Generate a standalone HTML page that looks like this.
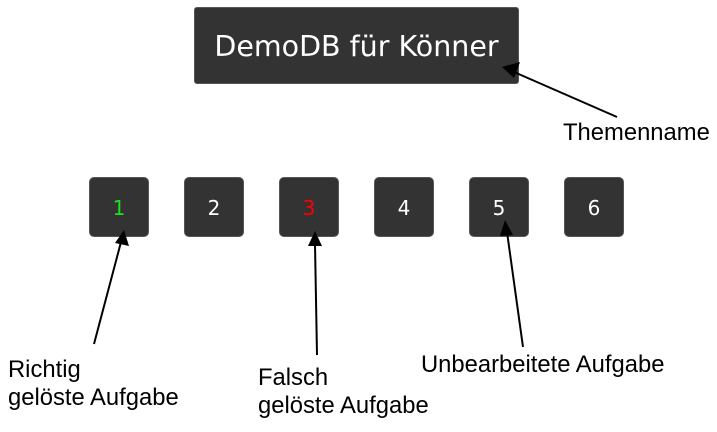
<!DOCTYPE html>
<html><head><style>
body{margin:0;width:717px;height:432px;background:#fff;position:relative;overflow:hidden;font-family:"Liberation Sans",Arial,sans-serif}
.t{position:absolute;left:194px;top:7px;width:325px;height:77px;background:#333;border:1px solid #555;border-radius:3px;box-sizing:border-box;color:#fff;font-family:"DejaVu Sans","Liberation Sans",sans-serif;font-size:28.5px;line-height:77px;text-align:center}
.b{position:absolute;top:177px;width:60px;height:60px;background:#333;border:1px solid #555;border-radius:5px;box-sizing:border-box;color:#fff;font-family:"DejaVu Sans",sans-serif;font-size:20px;line-height:60px;text-align:center}
.l{position:absolute;font-size:23.8px;line-height:28px;color:#000;white-space:nowrap}
svg{position:absolute;left:0;top:0}
</style></head><body>
<div class="t">DemoDB für Könner</div>
<div class="b" style="left:89px;color:#1ee01e">1</div>
<div class="b" style="left:184px">2</div>
<div class="b" style="left:279px;color:#f00">3</div>
<div class="b" style="left:374px">4</div>
<div class="b" style="left:469px">5</div>
<div class="b" style="left:564px">6</div>
<svg width="717" height="432">
<g stroke="#000" stroke-width="2" fill="#000">
<line x1="617" y1="117" x2="514" y2="72"/><polygon points="502,67 520,62 514,78" stroke="none"/>
<line x1="94" y1="344" x2="121" y2="242"/><polygon points="124,230 129,246 115,243" stroke="none"/>
<line x1="317" y1="355" x2="315" y2="244"/><polygon points="315,231 322,246 308,246" stroke="none"/>
<line x1="523" y1="347" x2="507" y2="232"/><polygon points="505,220 513,235 500,236" stroke="none"/>
</g></svg>
<div class="l" style="left:563px;top:119px">Themenname</div>
<div class="l" style="left:8px;top:356px">Richtig<br>gelöste Aufgabe</div>
<div class="l" style="left:258px;top:364px">Falsch<br>gelöste Aufgabe</div>
<div class="l" style="left:421px;top:351px">Unbearbeitete Aufgabe</div>
</body></html>
